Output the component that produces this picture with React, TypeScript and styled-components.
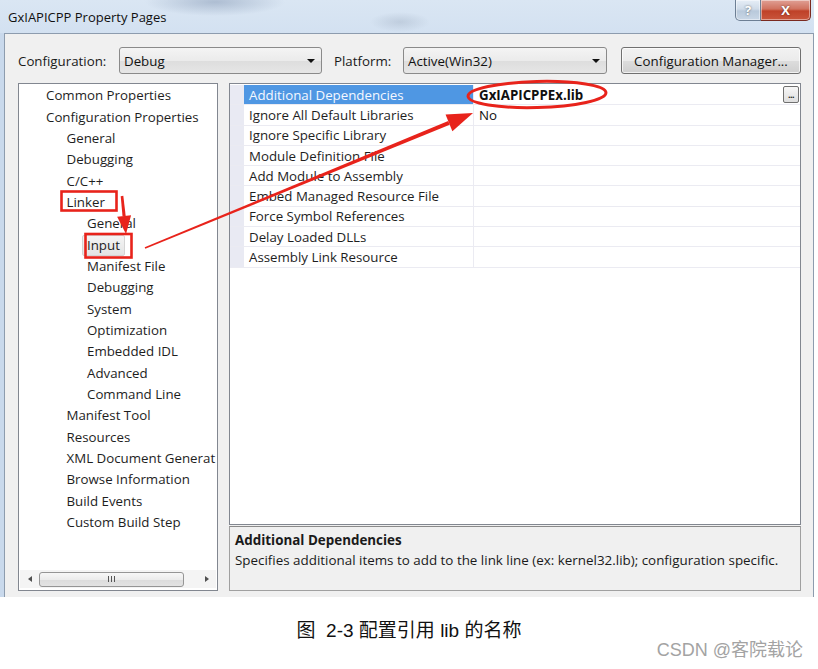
import React from "react";
import styled, { createGlobalStyle } from "styled-components";

const UI = `"Open Sans", "Noto Sans", sans-serif`;

const GlobalStyle = createGlobalStyle`
  html, body { margin: 0; padding: 0; background: #ffffff; }
  body { font-family: ${UI}; }
  * { box-sizing: border-box; }
`;

const Page = styled.div`
  position: relative;
  width: 818px;
  height: 669px;
  overflow: hidden;
  background: #ffffff;
  display: flex;
  flex-direction: column;
`;

const Window = styled.div`
  width: 814px;
  height: 597px;
  flex: none;
  display: flex;
  flex-direction: column;
  background: #c9d9ec;
`;

const TitleBar = styled.div`
  height: 33px;
  flex: none;
  display: flex;
  align-items: flex-start;
  justify-content: space-between;
  padding: 0 3px 0 8px;
  background:
    radial-gradient(ellipse 70px 14px at 215px 2px, rgba(120, 140, 170, 0.45), rgba(120, 140, 170, 0) 100%),
    radial-gradient(ellipse 30px 10px at 400px 22px, rgba(150, 165, 185, 0.35), rgba(150, 165, 185, 0) 100%),
    linear-gradient(180deg, #dae6f3 0%, #d3e1f1 100%);
`;

const Title = styled.div`
  font: 13px ${UI};
  line-height: 34px;
  color: #101010;
`;

const CaptionButtons = styled.div`
  display: flex;
  height: 21px;
`;

const CapButton = styled.div<{ $close?: boolean }>`
  width: ${(p) => (p.$close ? 50 : 26)}px;
  height: 21px;
  display: flex;
  align-items: center;
  justify-content: center;
  border: 1px solid ${(p) => (p.$close ? "#7a2a20" : "#6d7f94")};
  border-top: none;
  border-left: ${(p) => (p.$close ? "none" : undefined)};
  border-radius: ${(p) => (p.$close ? "0 0 5px 0" : "0 0 0 5px")};
  background: ${(p) =>
    p.$close
      ? "linear-gradient(180deg, #e0a095 0%, #d0725f 45%, #bf4128 55%, #c9563c 100%)"
      : "linear-gradient(180deg, #e6eef7 0%, #cfdbe8 45%, #b9c9db 55%, #c9d7e6 100%)"};
  box-shadow: inset 0 0 0 1px rgba(255, 255, 255, 0.45);
  color: #ffffff;
  font: bold 13px ${UI};
  text-shadow: 0 0 2px rgba(0, 0, 0, 0.6);
`;

const Body = styled.div`
  flex: 1;
  margin-left: 4px;
  border: 1px solid #8d9cae;
  border-bottom: none;
  background: #f0f0f0;
  padding: 13px 12px 6px 13px;
  display: flex;
  flex-direction: column;
  gap: 9px;
`;

const ConfigRow = styled.div`
  height: 27px;
  flex: none;
  display: flex;
  align-items: center;
`;

const FieldLabel = styled.div<{ $w: number }>`
  width: ${(p) => p.$w}px;
  flex: none;
  font: 13.3px ${UI};
  color: #1a1a1a;
`;

const Combo = styled.div<{ $w: number; $gapAfter?: number }>`
  width: ${(p) => p.$w}px;
  height: 27px;
  flex: none;
  margin-right: ${(p) => p.$gapAfter ?? 0}px;
  display: flex;
  align-items: center;
  justify-content: space-between;
  padding: 0 6px 0 4px;
  border: 1px solid #8a8a8a;
  border-radius: 3px;
  background: linear-gradient(180deg, #f4f4f4 0%, #ebebeb 50%, #dddddd 51%, #e6e6e6 100%);
  font: 13.3px ${UI};
  color: #111;
`;

const DropArrow = styled.span`
  width: 0;
  height: 0;
  border-left: 4px solid transparent;
  border-right: 4px solid transparent;
  border-top: 4px solid #111;
`;

const PushButton = styled.div<{ $w: number }>`
  width: ${(p) => p.$w}px;
  height: 27px;
  flex: none;
  display: flex;
  align-items: center;
  justify-content: center;
  border: 1px solid #707070;
  border-radius: 3px;
  background: linear-gradient(180deg, #f2f2f2 0%, #ebebeb 50%, #dddddd 51%, #cfcfcf 100%);
  box-shadow: inset 0 0 0 1px rgba(255, 255, 255, 0.7);
  font: 13.3px ${UI};
  color: #111;
`;

const Main = styled.div`
  height: 508px;
  flex: none;
  display: flex;
  gap: 11px;
`;

const Tree = styled.div`
  width: 200px;
  flex: none;
  display: flex;
  flex-direction: column;
  border: 1px solid #828790;
  background: #ffffff;
`;

const TreeList = styled.div`
  flex: 1;
  overflow: hidden;
  padding-top: 1px;
`;

const TreeRow = styled.div<{ $level: number }>`
  height: 21.35px;
  display: flex;
  align-items: center;
  padding-left: ${(p) => 27 + p.$level * 20.5}px;
  white-space: nowrap;
  overflow: hidden;
  font: 13.3px ${UI};
  color: #1e1e1e;
`;

const TreeLabel = styled.span<{ $selected?: boolean }>`
  display: inline-block;
  line-height: 19px;
  margin-left: -5px;
  padding: 0 4px;
  border: 1px solid ${(p) => (p.$selected ? "#d4d4d4" : "transparent")};
  border-radius: 2px;
  background: ${(p) => (p.$selected ? "linear-gradient(180deg, #f4f4f4, #e4e4e4)" : "transparent")};
`;

const HScroll = styled.div`
  height: 18px;
  flex: none;
  margin: 0 1px 2px 1px;
  display: flex;
  align-items: center;
  background: #f4f4f4;
`;

const ScrollArrow = styled.div<{ $dir: "left" | "right" }>`
  width: 19px;
  flex: none;
  display: flex;
  justify-content: center;
  &::before {
    content: "";
    width: 0;
    height: 0;
    border-top: 3.5px solid transparent;
    border-bottom: 3.5px solid transparent;
    ${(p) => (p.$dir === "left" ? "border-right: 4px solid #505050;" : "border-left: 4px solid #505050;")}
  }
`;

const Thumb = styled.div`
  width: 145px;
  height: 15px;
  flex: none;
  display: flex;
  align-items: center;
  justify-content: center;
  gap: 2px;
  border: 1px solid #959595;
  border-radius: 3px;
  background: linear-gradient(180deg, #f7f7f7 0%, #ececec 50%, #dcdcdc 51%, #e3e3e3 100%);
`;

const Grip = styled.span`
  width: 1px;
  height: 6px;
  background: #555;
`;

const Track = styled.div`
  flex: 1;
`;

const RightCol = styled.div`
  flex: 1;
  display: flex;
  flex-direction: column;
  gap: 1px;
`;

const Grid = styled.div`
  height: 442px;
  flex: none;
  border: 1px solid #828790;
  background: #ffffff;
  padding-top: 1px;
`;

const GridRow = styled.div`
  height: 20.3px;
  display: flex;
  border-bottom: 1px solid #ebebf2;
  font: 13.3px ${UI};
  color: #1e1e1e;
`;

const Gutter = styled.div`
  width: 14px;
  flex: none;
  background: #e9eaf3;
`;

const NameCell = styled.div<{ $selected?: boolean }>`
  width: 230px;
  flex: none;
  display: flex;
  align-items: center;
  padding-left: 5px;
  white-space: nowrap;
  overflow: hidden;
  border-right: 1px solid #ebebf2;
  background: ${(p) => (p.$selected ? "#4f97e3" : "transparent")};
  color: ${(p) => (p.$selected ? "#f4f8ff" : "inherit")};
`;

const ValueCell = styled.div<{ $bold?: boolean }>`
  flex: 1;
  display: flex;
  align-items: center;
  justify-content: space-between;
  padding: 0 1px 0 5px;
  font-weight: ${(p) => (p.$bold ? 700 : 400)};
  color: #101010;
`;

const EllipsisButton = styled.div`
  width: 16px;
  height: 17px;
  display: flex;
  align-items: flex-end;
  justify-content: center;
  padding-bottom: 3px;
  border: 1px solid #707070;
  border-radius: 2px;
  background: linear-gradient(180deg, #f7f7f7, #dedede);
  font: bold 9px ${UI};
  line-height: 8px;
  letter-spacing: -0.5px;
  color: #222;
`;

const Description = styled.div`
  height: 65px;
  flex: none;
  border: 1px solid #a0a0a0;
  border-top-color: #8a8a8a;
  background: #f0f0f0;
  padding: 3px 0 0 5px;
  font: 13.4px ${UI};
  line-height: 20px;
  color: #1a1a1a;
`;

const DescTitle = styled.div`
  font-weight: 700;
`;

const Footer = styled.div`
  flex: 1;
  display: flex;
  flex-direction: column;
`;

const FigureCaption = styled.div`
  margin-top: 23px;
  text-align: center;
  font: 19px "Liberation Sans", "Noto Sans CJK SC", sans-serif;
  line-height: 22px;
  color: #111;
`;

const Watermark = styled.div`
  margin-top: -2px;
  padding-right: 15px;
  text-align: right;
  font: 18px "Liberation Sans", "Noto Sans CJK SC", sans-serif;
  line-height: 20px;
  color: #a3a3a3;
`;

const Annotations = styled.svg`
  position: absolute;
  left: 0;
  top: 0;
  width: 818px;
  height: 669px;
  pointer-events: none;
`;

const treeItems: { label: string; level: number; selected?: boolean }[] = [
  { label: "Common Properties", level: 0 },
  { label: "Configuration Properties", level: 0 },
  { label: "General", level: 1 },
  { label: "Debugging", level: 1 },
  { label: "C/C++", level: 1 },
  { label: "Linker", level: 1 },
  { label: "General", level: 2 },
  { label: "Input", level: 2, selected: true },
  { label: "Manifest File", level: 2 },
  { label: "Debugging", level: 2 },
  { label: "System", level: 2 },
  { label: "Optimization", level: 2 },
  { label: "Embedded IDL", level: 2 },
  { label: "Advanced", level: 2 },
  { label: "Command Line", level: 2 },
  { label: "Manifest Tool", level: 1 },
  { label: "Resources", level: 1 },
  { label: "XML Document Generat", level: 1 },
  { label: "Browse Information", level: 1 },
  { label: "Build Events", level: 1 },
  { label: "Custom Build Step", level: 1 },
];

const properties: { name: string; value?: string }[] = [
  { name: "Additional Dependencies", value: "GxIAPICPPEx.lib" },
  { name: "Ignore All Default Libraries", value: "No" },
  { name: "Ignore Specific Library" },
  { name: "Module Definition File" },
  { name: "Add Module to Assembly" },
  { name: "Embed Managed Resource File" },
  { name: "Force Symbol References" },
  { name: "Delay Loaded DLLs" },
  { name: "Assembly Link Resource" },
];

function arrowPaths(tail: [number, number], tip: [number, number], headLen: number, headHalf: number, tailW: number, shaftW: number) {
  const dx = tip[0] - tail[0];
  const dy = tip[1] - tail[1];
  const len = Math.hypot(dx, dy);
  const ux = dx / len;
  const uy = dy / len;
  const nx = -uy;
  const ny = ux;
  const bx = tip[0] - ux * headLen;
  const by = tip[1] - uy * headLen;
  const shaft = `M ${tail[0] + nx * tailW} ${tail[1] + ny * tailW} L ${bx + nx * shaftW} ${by + ny * shaftW} L ${bx - nx * shaftW} ${by - ny * shaftW} L ${tail[0] - nx * tailW} ${tail[1] - ny * tailW} Z`;
  const head = `M ${tip[0]} ${tip[1]} L ${bx + nx * headHalf} ${by + ny * headHalf} L ${bx - nx * headHalf} ${by - ny * headHalf} Z`;
  return { shaft, head };
}

export default function App() {
  const longArrow = arrowPaths([145, 248], [473, 113], 26, 9, 0.8, 2);
  const downArrow = arrowPaths([122, 196], [126, 234], 18, 7, 1.3, 1.6);
  const red = "#e8231b";
  return (
    <Page>
      <GlobalStyle />
      <Window>
        <TitleBar>
          <Title>GxIAPICPP Property Pages</Title>
          <CaptionButtons>
            <CapButton>?</CapButton>
            <CapButton $close>X</CapButton>
          </CaptionButtons>
        </TitleBar>
        <Body>
          <ConfigRow>
            <FieldLabel $w={101}>Configuration:</FieldLabel>
            <Combo $w={203} $gapAfter={12}>
              <span>Debug</span>
              <DropArrow />
            </Combo>
            <FieldLabel $w={69}>Platform:</FieldLabel>
            <Combo $w={204} $gapAfter={14}>
              <span>Active(Win32)</span>
              <DropArrow />
            </Combo>
            <PushButton $w={180}>Configuration Manager...</PushButton>
          </ConfigRow>
          <Main>
            <Tree>
              <TreeList>
                {treeItems.map((it, i) => (
                  <TreeRow key={i} $level={it.level}>
                    <TreeLabel $selected={it.selected}>{it.label}</TreeLabel>
                  </TreeRow>
                ))}
              </TreeList>
              <HScroll>
                <ScrollArrow $dir="left" />
                <Thumb>
                  <Grip />
                  <Grip />
                  <Grip />
                </Thumb>
                <Track />
                <ScrollArrow $dir="right" />
              </HScroll>
            </Tree>
            <RightCol>
              <Grid>
                {properties.map((p, i) => (
                  <GridRow key={i}>
                    <Gutter />
                    <NameCell $selected={i === 0}>{p.name}</NameCell>
                    <ValueCell $bold={i === 0}>
                      <span>{p.value ?? ""}</span>
                      {i === 0 && <EllipsisButton>...</EllipsisButton>}
                    </ValueCell>
                  </GridRow>
                ))}
              </Grid>
              <Description>
                <DescTitle>Additional Dependencies</DescTitle>
                <div>Specifies additional items to add to the link line (ex: kernel32.lib); configuration specific.</div>
              </Description>
            </RightCol>
          </Main>
        </Body>
      </Window>
      <Footer>
        <FigureCaption>图&nbsp; 2-3 配置引用 lib 的名称</FigureCaption>
        <Watermark>CSDN @客院载论</Watermark>
      </Footer>
      <Annotations viewBox="0 0 818 669">
        <rect x={61.5} y={191.5} width={55} height={19} fill="none" stroke={red} strokeWidth={2.6} />
        <rect x={85.5} y={234} width={46} height={23.5} fill="none" stroke={red} strokeWidth={2.6} />
        <path d={downArrow.shaft} fill={red} />
        <path d={downArrow.head} fill={red} />
        <path d={longArrow.shaft} fill={red} />
        <path d={longArrow.head} fill={red} />
        <ellipse cx={537} cy={94.5} rx={69} ry={13} fill="none" stroke={red} strokeWidth={3} transform="rotate(-1.5 537 94.5)" />
      </Annotations>
    </Page>
  );
}
